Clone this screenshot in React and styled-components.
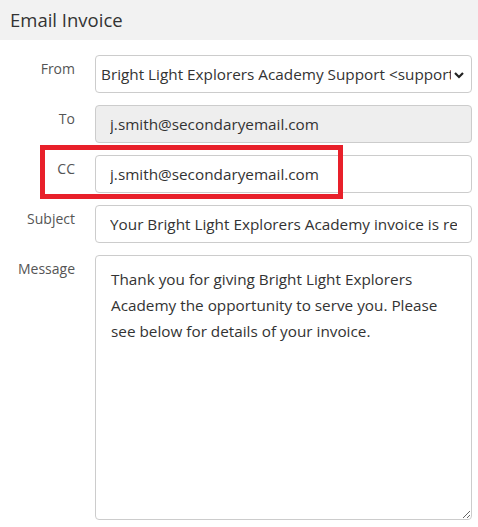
import styled, { createGlobalStyle } from "styled-components";

const GlobalStyle = createGlobalStyle`
  html, body {
    margin: 0;
    padding: 0;
    background: #fff;
  }
  body {
    font-family: "Open Sans", "Noto Sans", sans-serif;
    color: #333;
  }
  * {
    box-sizing: border-box;
  }
`;

const App = () => {
  return (
    <Page>
      <GlobalStyle />
      <Header>Email Invoice</Header>

      <Form>
        <Row>
          <Label>From</Label>
          <SelectWrap>
            <Select defaultValue="support">
              <option value="support">
                Bright Light Explorers Academy Support &lt;support@brightlightexplorers.com&gt;
              </option>
            </Select>
            <Chevron viewBox="0 0 12 12">
              <path d="M2 4 L6 8 L10 4" fill="none" stroke="#222" strokeWidth="2.2" />
            </Chevron>
          </SelectWrap>
        </Row>

        <Row>
          <Label>To</Label>
          <Input disabled defaultValue="j.smith@secondaryemail.com" />
        </Row>

        <Row>
          <Highlight />
          <Label>CC</Label>
          <Input defaultValue="j.smith@secondaryemail.com" />
        </Row>

        <Row>
          <Label>Subject</Label>
          <Input defaultValue="Your Bright Light Explorers Academy invoice is ready" />
        </Row>

        <Row>
          <Label>Message</Label>
          <Message
            defaultValue="Thank you for giving Bright Light Explorers Academy the opportunity to serve you. Please see below for details of your invoice."
          />
        </Row>
      </Form>
    </Page>
  );
};

export default App;

const Page = styled.div`
  width: 478px;
`;

const Header = styled.div`
  height: 40px;
  background: #f2f2f2;
  padding: 7px 10px 0;
  font-size: 18.5px;
  color: #333;
`;

const Form = styled.div`
  display: flex;
  flex-direction: column;
  gap: 12px;
  padding: 15px 6px 0 0;
`;

const Row = styled.div`
  position: relative;
  display: flex;
  align-items: flex-start;
  gap: 20px;
`;

const Label = styled.div`
  width: 75px;
  flex-shrink: 0;
  text-align: right;
  font-size: 14px;
  color: #555;
  padding-top: 4px;
`;

const fieldBase = `
  width: 377px;
  height: 38px;
  border: 1px solid #ccc;
  border-radius: 4px;
  font-family: "Open Sans", "Noto Sans", sans-serif;
  font-size: 15.3px;
  color: #333;
  outline: none;
`;

const Input = styled.input`
  ${fieldBase}
  padding: 0 14px;
  background: #fff;
  &:disabled {
    background: #eee;
    color: #333;
  }
`;

const SelectWrap = styled.div`
  position: relative;
  width: 377px;
`;

const Select = styled.select`
  ${fieldBase}
  appearance: none;
  padding: 0 20px 0 5px;
  background: #fff;
`;

const Chevron = styled.svg`
  position: absolute;
  right: 7px;
  top: 14px;
  width: 12px;
  height: 12px;
  pointer-events: none;
`;

const Message = styled.textarea`
  ${fieldBase}
  height: 265px;
  padding: 10px 12px 10px 15px;
  line-height: 26px;
  resize: both;
`;

const Highlight = styled.div`
  position: absolute;
  left: 40px;
  top: -10px;
  width: 303px;
  height: 54px;
  border: 5px solid #e8202a;
  pointer-events: none;
`;
